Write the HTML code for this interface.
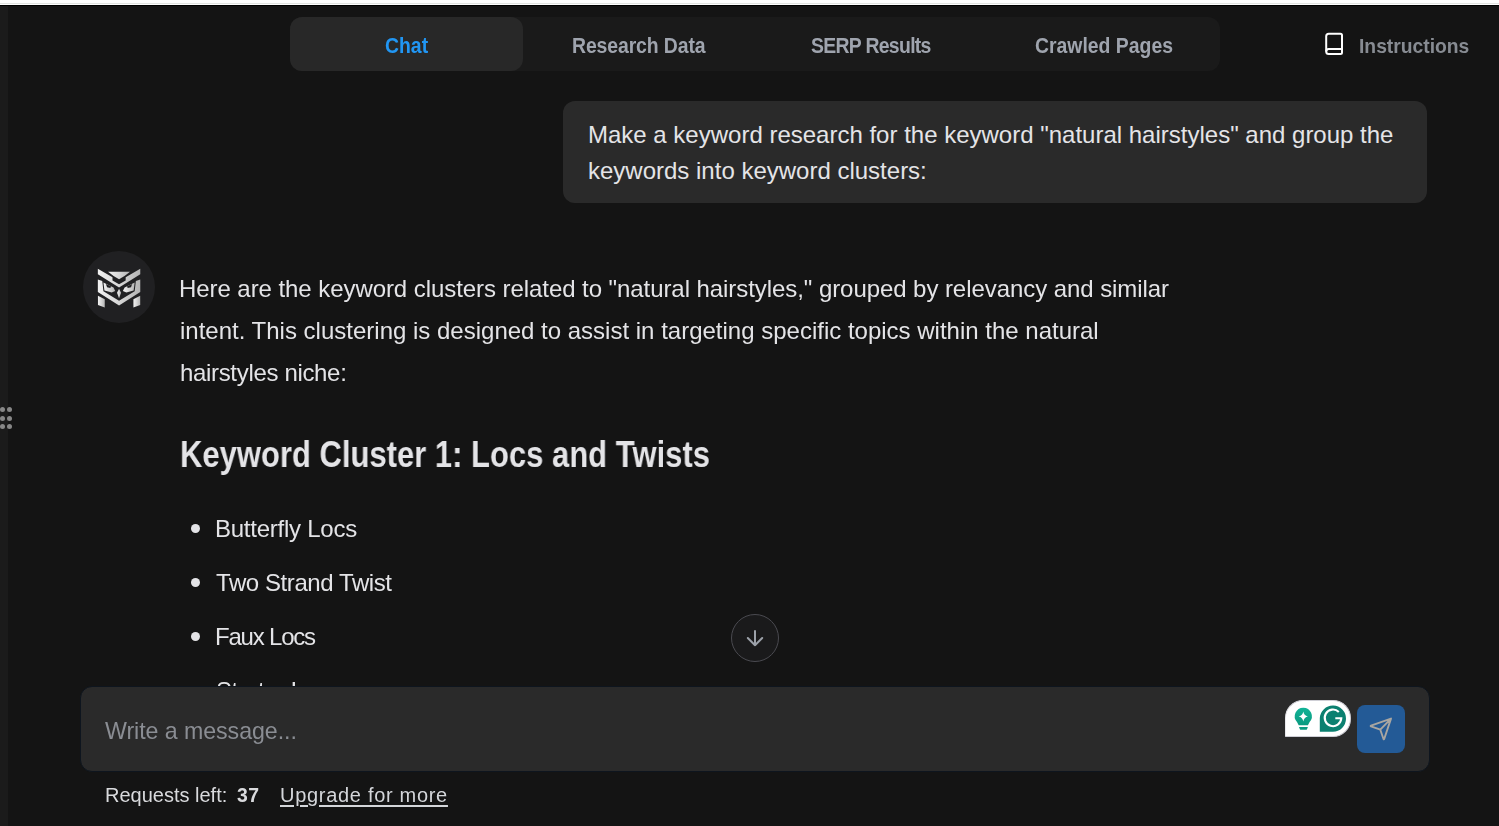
<!DOCTYPE html>
<html><head><meta charset="utf-8">
<style>
html,body{margin:0;padding:0;}
body{width:1499px;height:826px;overflow:hidden;background:#141414;position:relative;font-family:"Liberation Sans",sans-serif;}
.abs{position:absolute;}
#topw{left:0;top:0;width:1499px;height:5px;background:#fff;}
#topg{left:0;top:3px;width:1499px;height:1px;background:#e2e4e2;}
#topb{left:0;top:5px;width:1499px;height:1px;background:#000;}
#lstrip{left:0;top:6px;width:8px;height:820px;background:#1b1b1b;}
.dot{position:absolute;width:5px;height:5px;border-radius:50%;background:#878787;}
#tabs{left:290px;top:17px;width:930px;height:54px;background:#1a1a1a;border-radius:12px;}
.tab{position:absolute;top:0;height:54px;width:232.5px;text-align:center;line-height:54px;font-weight:700;font-size:19.4px;color:#9fa4ae;}
.tab span{display:inline-block;will-change:transform;transform-origin:50% 33.7px;transform:translateY(2px) scaleY(1.15);}
.tab.active{background:#282828;border-radius:12px;color:#2196f3;}
.txt{white-space:nowrap;color:#e4e4e7;will-change:transform;}
#instr{left:1320px;top:17px;height:54px;line-height:54px;}
#instr .lbl{position:absolute;left:39px;top:0;font-weight:700;font-size:19.3px;color:#878b92;white-space:nowrap;}
#instr .lbl span{display:inline-block;will-change:transform;transform:translateY(2.3px) scaleY(1.08);}
#bubble{left:563px;top:101px;width:864px;height:102px;background:#2a2a2a;border-radius:12px;}
#utext{will-change:auto;left:588px;top:116.9px;font-size:24px;line-height:36px;}
#avatar{left:83px;top:251px;width:72px;height:72px;border-radius:50%;background:#202022;}
#body1{left:180px;top:267.7px;font-size:24px;line-height:42px;}
#h2{left:180px;top:436.5px;font-size:36px;line-height:36px;font-weight:700;transform-origin:0 0;transform:scaleX(0.861);}
.li{position:absolute;left:216px;font-size:24px;line-height:24px;}
.bul{position:absolute;left:191px;width:9px;height:9px;border-radius:50%;background:#e4e4e7;}
#scrollbtn{left:731px;top:614px;width:46px;height:46px;border-radius:50%;border:1px solid #4a4a50;background:#1a1a1b;}
#input{left:80px;top:686px;width:1348px;height:84px;background:#2a2a2a;border-radius:12px;border:1px solid #0e151e;}
#ph{will-change:transform;left:105.3px;top:719px;letter-spacing:-0.06px;font-size:23.2px;line-height:24px;color:#8a8d93;white-space:nowrap;}
#send{left:1357px;top:705px;width:48px;height:48px;border-radius:8px;background:#235a96;}
#foot{will-change:transform;left:105px;top:785px;font-size:20px;line-height:20px;color:#d9dadd;white-space:nowrap;}
#foot37{will-change:transform;left:237px;letter-spacing:0.4px;top:785px;font-size:19.4px;line-height:20px;font-weight:700;color:#d9dadd;white-space:nowrap;}
#upg{will-change:transform;left:280px;top:785px;font-size:20px;line-height:20px;color:#d4d6da;white-space:nowrap;letter-spacing:0.7px;text-decoration:underline;text-decoration-thickness:2px;text-underline-offset:3px;}
</style></head><body>
<div class="abs" id="topw"></div>
<div class="abs" id="topg"></div>
<div class="abs" id="topb"></div>
<div class="abs" id="lstrip"></div>
<div class="dot" style="left:0px;top:406.8px"></div>
<div class="dot" style="left:7px;top:406.8px"></div>
<div class="dot" style="left:0px;top:415.5px"></div>
<div class="dot" style="left:7px;top:415.5px"></div>
<div class="dot" style="left:0px;top:424.3px"></div>
<div class="dot" style="left:7px;top:424.3px"></div>

<div class="abs" id="tabs">
  <div class="tab active" style="left:0"><span>Chat</span></div>
  <div class="tab" style="left:232.5px;letter-spacing:-0.1px"><span>Research Data</span></div>
  <div class="tab" style="left:465px;letter-spacing:-0.68px"><span>SERP Results</span></div>
  <div class="tab" style="left:697.5px"><span>Crawled Pages</span></div>
</div>

<div class="abs" id="instr">
  <svg class="abs" style="left:0;top:0" width="30" height="54" viewBox="0 0 30 54">
    <path d="M8.7 16.8 H20.5 Q22 16.8 22 18.3 V35.6 Q22 37.1 20.5 37.1 H8.7 Q6.2 37.1 6.2 34.6 V19.3 Q6.2 16.8 8.7 16.8 Z" fill="none" stroke="#fff" stroke-width="2"/>
    <path d="M6.2 34.6 Q6.2 32.1 8.7 32.1 H22" fill="none" stroke="#fff" stroke-width="2"/>
  </svg>
  <div class="lbl"><span>Instructions</span></div>
</div>

<div class="abs" id="bubble"></div>
<div class="abs txt" id="utext">Make a keyword research for the keyword "natural hairstyles" and group the<br>keywords into keyword clusters:</div>

<div class="abs" id="avatar"></div>
<svg class="abs" style="left:94px;top:264px" width="50" height="48" viewBox="0 0 860 826">
  <defs><linearGradient id="og" x1="0" y1="0" x2="1" y2="0"><stop offset="0" stop-color="#f2f2f2"/><stop offset="0.5" stop-color="#d6d6d6"/><stop offset="1" stop-color="#b4b4b4"/></linearGradient></defs>
  <g fill="url(#og)">
  <polygon points="242,133 620,133 525,206 431,262 337,206"/>
  <polygon points="66,82 318,228 318,285 431,350 545,285 545,228 796,82 796,177 431,404 66,177"/>
  <polygon points="66,268 142,294 162,470 431,632 700,470 720,294 796,268 796,480 431,712 66,480"/>
  <polygon points="162,318 335,405 365,465 305,492 180,455"/>
  <polygon points="700,318 527,405 497,465 557,492 682,455"/>
  <polygon points="431,425 466,495 431,588 396,495"/>
  <polygon points="68,545 185,605 185,750 68,705"/>
  <polygon points="795,545 678,605 678,750 795,705"/>
  </g>
  <g fill="#1f1f21">
  <polygon points="205,345 292,385 282,412 225,402"/>
  <polygon points="657,345 570,385 580,412 637,402"/>
  </g>
</svg>

<div class="abs txt" id="body1"><span style="letter-spacing:-0.065px;position:relative;left:-1px">Here are the keyword clusters related to "natural hairstyles," grouped by relevancy and similar</span><br>intent. This clustering is designed to assist in targeting specific topics within the natural<br><span style="letter-spacing:-0.33px">hairstyles niche:</span></div>

<div class="abs txt" id="h2">Keyword Cluster 1: Locs and Twists</div>

<div class="bul" style="top:524px"></div><div class="li txt" style="top:516.7px;letter-spacing:-0.25px;margin-left:-1px">Butterfly Locs</div>
<div class="bul" style="top:578px"></div><div class="li txt" style="top:570.7px;letter-spacing:-0.42px">Two Strand Twist</div>
<div class="bul" style="top:632px"></div><div class="li txt" style="top:624.7px;letter-spacing:-1.2px;margin-left:-1.5px">Faux Locs</div>
<div class="li txt" style="top:678.7px;letter-spacing:-0.5px">Starter Locs</div>

<div class="abs" id="scrollbtn"></div>
<svg class="abs" style="left:731px;top:614px" width="48" height="48" viewBox="731 614 48 48">
  <path d="M755 631 V645.3 M747.8 638 L755 645.2 L762.2 638" fill="none" stroke="#9ca1a9" stroke-width="2" stroke-linecap="round" stroke-linejoin="round"/>
</svg>

<div class="abs" id="input"></div>
<div class="abs" id="ph">Write a message...</div>
<div class="abs" style="left:1285px;top:700px;width:66px;height:37px;box-sizing:border-box;background:#fff;border-radius:18px 18px 18px 0;border:1px solid #cfcfd6;border-left-color:#e8e8ec;"></div>
<svg class="abs" style="left:1284px;top:698px" width="70" height="42" viewBox="0 0 70 42">
  <defs><linearGradient id="bg1" x1="0" y1="0" x2="0" y2="1"><stop offset="0" stop-color="#12b397"/><stop offset="1" stop-color="#0a9a80"/></linearGradient></defs>
  <path d="M19.3 9.7 A8.6 8.6 0 0 1 25.6 24.1 L23.9 27.2 H14.7 L13 24.1 A8.6 8.6 0 0 1 19.3 9.7 Z" fill="url(#bg1)"/>
  <path d="M15 29 H23.9 L23 31.3 Q22.6 31.8 22 31.8 H16.9 Q16.3 31.8 15.9 31.3 Z" fill="#0b9a80"/>
  <path d="M19.3 13.6 Q19.9 17.6 23.9 18.4 Q19.9 19.2 19.3 23.5 Q18.7 19.2 14.7 18.4 Q18.7 17.6 19.3 13.6 Z" fill="#fff"/>
  <path d="M35.8 33.8 V20.3 A13.1 13.1 0 1 1 48.9 33.8 Z" fill="#0b8070"/>
  <path d="M54.8 13.9 A8.3 8.3 0 1 0 57.3 20.3 H51.3" fill="none" stroke="#fff" stroke-width="2.1"/>
</svg>
<div class="abs" id="send"></div>
<svg class="abs" style="left:1357px;top:705px" width="48" height="48" viewBox="1357 705 48 48">
  <path d="M1380.3 729.7 L1391 718.6 M1391 718.6 L1384.2 739 Q1383.9 739.8 1383.5 739 L1380.3 729.7 L1371 726.4 Q1370.3 726 1371 725.7 Z" fill="none" stroke="#a9a6a1" stroke-width="1.9" stroke-linecap="round" stroke-linejoin="round"/>
</svg>

<div class="abs" id="foot">Requests left:</div>
<div class="abs" id="foot37">37</div>
<div class="abs" id="upg">Upgrade for more</div>

</body></html>
